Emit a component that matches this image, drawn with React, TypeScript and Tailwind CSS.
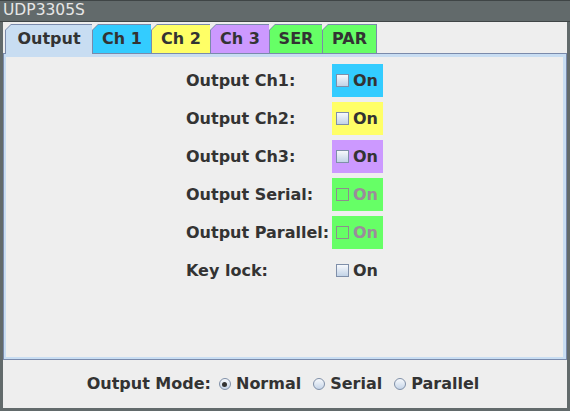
import React from "react";

const tabs = [
  { label: "Output", w: "w-[87px]", bg: "bg-[#c8ddf2]", selected: true },
  { label: "Ch 1", w: "w-[59px]", bg: "bg-[#33ccff]" },
  { label: "Ch 2", w: "w-[59px]", bg: "bg-[#ffff66]" },
  { label: "Ch 3", w: "w-[59px]", bg: "bg-[#cc99ff]" },
  { label: "SER", w: "w-[53px]", bg: "bg-[#66ff66]" },
  { label: "PAR", w: "w-[55px]", bg: "bg-[#66ff66]", last: true },
];

const rows = [
  { label: "Output Ch1:", bg: "bg-[#33ccff]" },
  { label: "Output Ch2:", bg: "bg-[#ffff66]" },
  { label: "Output Ch3:", bg: "bg-[#cc99ff]" },
  { label: "Output Serial:", bg: "bg-[#66ff66]", disabled: true },
  { label: "Output Parallel:", bg: "bg-[#66ff66]", disabled: true },
  { label: "Key lock:", bg: "" },
];

function Tab({ t }: { t: any }) {
  return (
    <div
      className={`${t.w} ${t.selected ? "h-[30px] -mb-[1px] relative z-10" : "h-[29px]"} flex pl-[1px] pt-[1px] ${t.last ? "pr-[1px]" : ""} bg-[#7a8aab] [clip-path:polygon(0_6px,6px_0,100%_0,100%_100%,0_100%)]`}
    >
      <div
        className={`flex-1 ${t.bg} flex items-center justify-center pb-[1px] text-[16px] font-bold text-[#333333] [clip-path:polygon(0_5px,5px_0,100%_0,100%_100%,0_100%)]`}
      >
        {t.label}
      </div>
    </div>
  );
}

function CheckBox({ disabled }: { disabled?: boolean }) {
  return disabled ? (
    <div className="w-[13px] h-[13px] border border-[#8e8e8e]" />
  ) : (
    <div className="w-[13px] h-[13px] border border-[#7f8fa9] bg-gradient-to-b from-[#f7f9fc] to-[#c2d3e7]" />
  );
}

function Radio({ checked }: { checked?: boolean }) {
  return (
    <div className="w-[12px] h-[12px] rounded-full border border-[#8090a8] bg-gradient-to-b from-[#f7f9fc] to-[#c6d5e8] flex items-center justify-center">
      {checked && <div className="w-[5px] h-[5px] rounded-full bg-[#333333]" />}
    </div>
  );
}

export default function App() {
  return (
    <div className="w-[570px] h-[411px] bg-[#626a6b] flex flex-col font-['DejaVu_Sans',sans-serif]">
      <div className="h-[22px] border-t border-b border-[#3f4546] flex items-center pl-[3px] text-[15.5px] text-[#e6e6e6] leading-none">
        UDP3305S
      </div>
      <div className="flex-1 mx-[3px] mb-[3px] bg-[#eeeeee] flex flex-col">
        <div className="flex items-end pt-[2px] pl-[2px] h-[31px]">
          {tabs.map((t) => (
            <Tab key={t.label} t={t} />
          ))}
        </div>
        <div className="h-[307px] border border-[#7a8aab]">
          <div className="h-full border-t-[3px] border-l-[2px] border-r-[3px] border-b-[2px] border-[#c8ddf2] flex justify-center pt-[7px]">
            <div className="grid grid-cols-[146px_51px] gap-y-[5px] content-start">
              {rows.map((r) => (
                <React.Fragment key={r.label}>
                  <div className="h-[33px] flex items-center pt-[1px] text-[16px] font-bold text-[#333333] whitespace-nowrap">
                    {r.label}
                  </div>
                  <div className={`h-[33px] flex items-center pl-[4px] gap-[4px] ${r.bg}`}>
                    <CheckBox disabled={r.disabled} />
                    <span className={`text-[16px] font-bold ${r.disabled ? "text-[#9b8c9b]" : "text-[#333333]"}`}>On</span>
                  </div>
                </React.Fragment>
              ))}
            </div>
          </div>
        </div>
        <div className="flex-1 flex items-center justify-center pr-[4px] text-[16px] font-bold text-[#333333]">
          <span>Output Mode:</span>
          <div className="flex items-center ml-[8px] gap-[5px]">
            <Radio checked />
            <span>Normal</span>
          </div>
          <div className="flex items-center ml-[12px] gap-[5px]">
            <Radio />
            <span>Serial</span>
          </div>
          <div className="flex items-center ml-[12px] gap-[5px]">
            <Radio />
            <span>Parallel</span>
          </div>
        </div>
      </div>
    </div>
  );
}
